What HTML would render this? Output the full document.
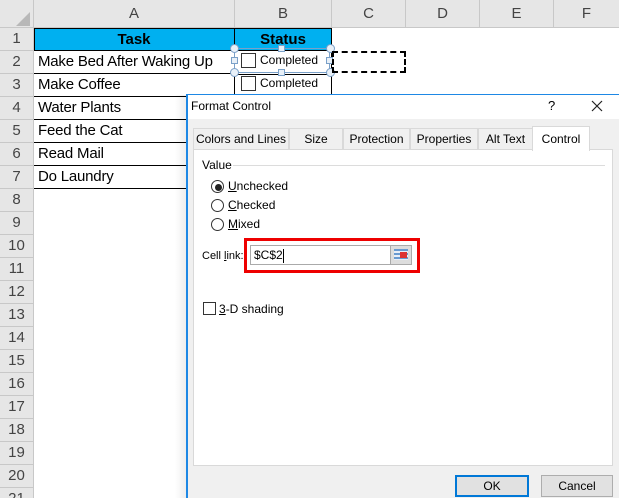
<!DOCTYPE html>
<html><head><style>
*{margin:0;padding:0;box-sizing:border-box}
html,body{width:619px;height:498px;overflow:hidden}
body{background:#fff;position:relative;font-family:"Liberation Sans",sans-serif}
.a{position:absolute}
.hdr{background:#e6e6e6;border-right:1px solid #c8c8c8;border-bottom:1px solid #c8c8c8;color:#444;font-size:15px;text-align:center}
.cell{font-size:15px;color:#000;padding-left:4px;line-height:22px;letter-spacing:-0.2px;white-space:nowrap}
.dlg{font-size:12px;color:#000}
.tab{position:absolute;top:128px;height:21px;border:1px solid #d9d9d9;border-bottom:none;background:#f0f0f0;text-align:center;line-height:20px;font-size:12px}
.rad{position:absolute;width:13px;height:13px;border:1px solid #333;border-radius:50%;background:#fff}
.hd{position:absolute;width:7px;height:7px;border:1px solid #7aa0c8;background:#e8f0f8}
.hc{position:absolute;width:9px;height:9px;border:1px solid #7aa0c8;background:#e8f0f8;border-radius:50%}
</style></head><body>
<div class="a hdr" style="left:0;top:0;width:34px;height:28px"></div>
<div class="a" style="left:16px;top:12px;width:0;height:0;border-left:14px solid transparent;border-bottom:14px solid #b8b8b8"></div>
<div class="a hdr" style="left:34px;top:0;width:201px;height:28px;line-height:28px">A</div>
<div class="a hdr" style="left:235px;top:0;width:97px;height:28px;line-height:28px">B</div>
<div class="a hdr" style="left:332px;top:0;width:74px;height:28px;line-height:28px">C</div>
<div class="a hdr" style="left:406px;top:0;width:74px;height:28px;line-height:28px">D</div>
<div class="a hdr" style="left:480px;top:0;width:74px;height:28px;line-height:28px">E</div>
<div class="a hdr" style="left:554px;top:0;width:66px;height:28px;line-height:28px">F</div>
<div class="a" style="left:0;top:28px;width:34px">
<div class="hdr" style="height:23px;line-height:22px">1</div><div class="hdr" style="height:23px;line-height:22px">2</div><div class="hdr" style="height:23px;line-height:22px">3</div><div class="hdr" style="height:23px;line-height:22px">4</div><div class="hdr" style="height:23px;line-height:22px">5</div><div class="hdr" style="height:23px;line-height:22px">6</div><div class="hdr" style="height:23px;line-height:22px">7</div><div class="hdr" style="height:23px;line-height:22px">8</div><div class="hdr" style="height:23px;line-height:22px">9</div><div class="hdr" style="height:23px;line-height:22px">10</div><div class="hdr" style="height:23px;line-height:22px">11</div><div class="hdr" style="height:23px;line-height:22px">12</div><div class="hdr" style="height:23px;line-height:22px">13</div><div class="hdr" style="height:23px;line-height:22px">14</div><div class="hdr" style="height:23px;line-height:22px">15</div><div class="hdr" style="height:23px;line-height:22px">16</div><div class="hdr" style="height:23px;line-height:22px">17</div><div class="hdr" style="height:23px;line-height:22px">18</div><div class="hdr" style="height:23px;line-height:22px">19</div><div class="hdr" style="height:23px;line-height:22px">20</div><div class="hdr" style="height:23px;line-height:22px">21</div>
</div>
<div class="a" style="left:34px;top:28px;width:298px;height:23px;background:#00b0f0;border:1px solid #000"></div>
<div class="a" style="left:234px;top:28px;width:1px;height:161px;background:#000"></div>
<div class="a" style="left:331px;top:28px;width:1px;height:70px;background:#000"></div>
<div class="a" style="left:34px;top:28px;width:200px;text-align:center;font-weight:bold;font-size:15px;line-height:23px">Task</div>
<div class="a" style="left:235px;top:28px;width:96px;text-align:center;font-weight:bold;font-size:15px;line-height:23px">Status</div>
<div class="a" style="left:34px;top:51px;width:200px">
<div class="cell" style="height:23px;border-bottom:1px solid #000">Make Bed After Waking Up</div>
<div class="cell" style="height:23px;border-bottom:1px solid #000">Make Coffee</div>
<div class="cell" style="height:23px;border-bottom:1px solid #000">Water Plants</div>
<div class="cell" style="height:23px;border-bottom:1px solid #000">Feed the Cat</div>
<div class="cell" style="height:23px;border-bottom:1px solid #000">Read Mail</div>
<div class="cell" style="height:23px;border-bottom:1px solid #000">Do Laundry</div>
</div>
<div class="a" style="left:235px;top:74px;width:96px;height:1px;background:#000"></div>
<div class="a" style="left:235px;top:97px;width:96px;height:1px;background:#000"></div>
<div class="a" style="left:241px;top:53px;width:15px;height:15px;border:1px solid #333;background:#fff"></div>
<div class="a" style="left:260px;top:52px;font-size:12px;line-height:17px">Completed</div>
<div class="a" style="left:241px;top:76px;width:15px;height:15px;border:1px solid #333;background:#fff"></div>
<div class="a" style="left:260px;top:75px;font-size:12px;line-height:17px">Completed</div>
<div class="a" style="left:234px;top:48px;width:96px;height:25px;border:1px solid #7aa0c8"></div>
<div class="hc" style="left:230px;top:44px"></div><div class="hc" style="left:326px;top:44px"></div>
<div class="hc" style="left:230px;top:68px"></div><div class="hc" style="left:326px;top:68px"></div>
<div class="hd" style="left:278px;top:45px"></div><div class="hd" style="left:278px;top:69px"></div>
<div class="hd" style="left:231px;top:57px"></div><div class="hd" style="left:326px;top:57px"></div>
<div class="a" style="left:332px;top:51px;width:74px;height:22px;border:2px dashed #000"></div>
<div class="a" style="left:175px;top:95px;width:12px;height:403px;background:linear-gradient(to right,rgba(0,0,0,0),rgba(0,0,0,.08))"></div>
<div class="a dlg" style="left:186px;top:94px;width:433px;height:404px;background:#f0f0f0;border-left:2px solid #1e88e5;border-top:1px solid #1e88e5"></div>
<div class="a" style="left:188px;top:95px;width:431px;height:24px;background:#fff"></div>
<div class="a" style="left:191px;top:99px;font-size:12px">Format Control</div>
<div class="a" style="left:548px;top:98px;font-size:13px">?</div>
<svg class="a" style="left:591px;top:100px" width="12" height="12"><path d="M1 1L11 11M11 1L1 11" stroke="#222" stroke-width="1.2"/></svg>
<div class="tab" style="left:193px;width:96px">Colors and Lines</div>
<div class="tab" style="left:289px;width:54px">Size</div>
<div class="tab" style="left:343px;width:67px">Protection</div>
<div class="tab" style="left:410px;width:68px">Properties</div>
<div class="tab" style="left:478px;width:55px">Alt Text</div>
<div class="a" style="left:193px;top:149px;width:420px;height:317px;background:#fff;border:1px solid #d9d9d9"></div>
<div class="tab" style="left:532px;top:126px;width:58px;height:25px;background:#fff;border-color:#d9d9d9;line-height:24px">Control</div>
<div class="a dlg" style="left:202px;top:158px">Value</div>
<div class="a" style="left:233px;top:165px;width:372px;height:1px;background:#dcdcdc"></div>
<div class="rad" style="left:211px;top:180px"></div><div class="a" style="left:215px;top:184px;width:7px;height:7px;border-radius:50%;background:#222"></div>
<div class="a dlg" style="left:228px;top:179px"><u>U</u>nchecked</div>
<div class="rad" style="left:211px;top:199px"></div>
<div class="a dlg" style="left:228px;top:198px"><u>C</u>hecked</div>
<div class="rad" style="left:211px;top:218px"></div>
<div class="a dlg" style="left:228px;top:217px"><u>M</u>ixed</div>
<div class="a dlg" style="left:202px;top:250px;font-size:11px">Cell <u>l</u>ink:</div>
<div class="a" style="left:244px;top:238px;width:176px;height:35px;border:3px solid #ee0000"></div>
<div class="a" style="left:250px;top:245px;width:141px;height:20px;border:1px solid #aaa;background:#fff;font-size:12px;line-height:18px;padding-left:3px">$C$2<span style="display:inline-block;width:1px;height:14px;background:#000;vertical-align:middle"></span></div>
<div class="a" style="left:390px;top:245px;width:22px;height:20px;border:1px solid #aaa;background:#ddd"></div>
<div class="a" style="left:394px;top:249px;width:14px;height:11px;background:repeating-linear-gradient(#6a9ad0 0 2px,#e8eef8 2px 4px)"></div>
<div class="a" style="left:400px;top:252px;width:7px;height:6px;background:#d33"></div>
<div class="a" style="left:203px;top:302px;width:13px;height:13px;border:1px solid #333;background:#fff"></div>
<div class="a dlg" style="left:219px;top:302px"><u>3</u>-D shading</div>
<div class="a dlg" style="left:455px;top:475px;width:74px;height:22px;border:2px solid #0078d7;background:#e1e1e1;text-align:center;line-height:18px">OK</div>
<div class="a dlg" style="left:541px;top:475px;width:72px;height:22px;border:1px solid #adadad;background:#e1e1e1;text-align:center;line-height:20px">Cancel</div>
</body></html>
